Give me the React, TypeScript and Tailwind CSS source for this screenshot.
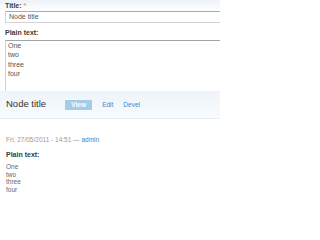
import React from 'react';

const lines = ['One', 'two', 'three', 'four'];

const App = () => {
  return (
    <div className="w-[220px] h-[213px] overflow-hidden bg-white text-[#3a3a3a] font-['Liberation_Sans',Arial,sans-serif]">
      <div className="h-[91px] pl-[5px] bg-gradient-to-b from-[#eef3f9] to-white to-[12px] overflow-hidden">
        <div className="h-[11px] pt-[1px] text-[7px] leading-[10px] font-bold">
          Title: <span className="text-[#f5a623]">*</span>
        </div>
        <div className="h-[12px] border border-[#d2d2d2] border-t-[#aaaaaa] bg-white pl-[3px] text-[7px] leading-[10px] text-[#555] -mr-[4px]">
          Node title
        </div>
        <div className="mt-[5px] h-[10px] text-[7px] leading-[10px] font-bold">Plain text:</div>
        <div className="mt-[2px] h-[60px] border border-b-0 border-[#d2d2d2] border-t-[#a4a4a4] bg-white pl-[2px] text-[7px] leading-[9.3px] text-[#555] -mr-[4px]">
          {lines.map((l) => (
            <div key={l}>{l}</div>
          ))}
        </div>
      </div>
      <div className="h-[28px] pl-[6px] flex items-center gap-[19px] border-b border-[#e6edf4] bg-gradient-to-b from-[#eef4fa] to-[#f9fbfd]">
        <div className="text-[9.5px] leading-[12px] text-[#333] -mt-[2px]">Node title</div>
        <div className="flex items-center gap-[10px] text-[6.5px] mt-[1px]">
          <span className="w-[27px] h-[10px] leading-[10px] text-center bg-[#a3cbea] text-white font-bold">View</span>
          <span className="text-[#3a86cf]">Edit</span>
          <span className="text-[#3a86cf]">Devel</span>
        </div>
      </div>
      <div className="pl-[6px] pt-[16px] text-[6.5px] leading-[10px] text-[#999]">
        Fri, 27/05/2011 - 14:51 — <span className="text-[#3a86cf]">admin</span>
      </div>
      <div className="pl-[6px] mt-[5px] text-[7px] leading-[10px] font-bold">Plain text:</div>
      <div className="pl-[6px] mt-[3px] text-[6.5px] leading-[7.7px] text-[#666]">
        {lines.map((l) => (
          <div key={l}>{l}</div>
        ))}
      </div>
    </div>
  );
};

export default App;
